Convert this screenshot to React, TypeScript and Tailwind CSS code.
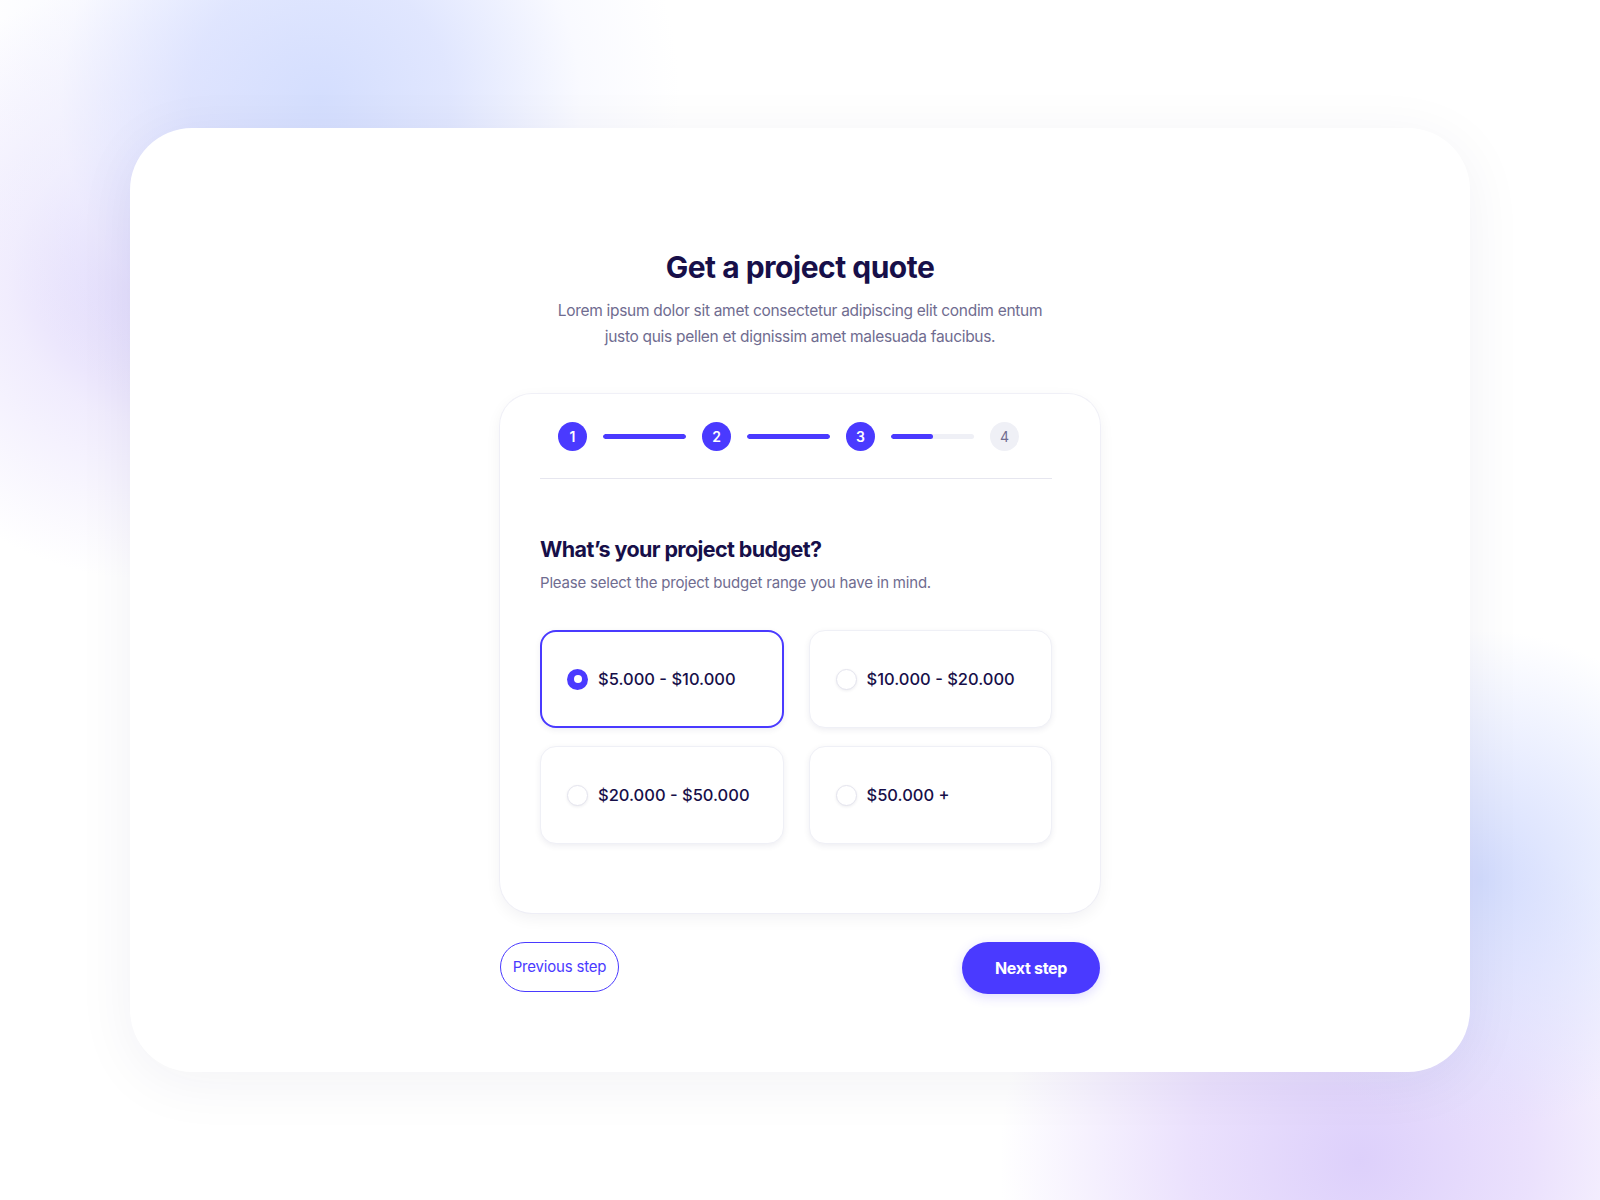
import React from "react";

const options = [
  { label: "$5.000 - $10.000", selected: true },
  { label: "$10.000 - $20.000", selected: false },
  { label: "$20.000 - $50.000", selected: false },
  { label: "$50.000 +", selected: false },
];

function Radio({ selected }: { selected: boolean }) {
  if (selected) {
    return (
      <span className="flex h-[21px] w-[21px] shrink-0 items-center justify-center rounded-full bg-[#4a3aff]">
        <span className="h-[8px] w-[8px] rounded-full bg-white" />
      </span>
    );
  }
  return (
    <span className="h-[21px] w-[21px] shrink-0 rounded-full border border-[#e4e4ee] bg-white shadow-[0_1px_3px_rgba(20,20,70,0.08)]" />
  );
}

function Step({ n, active }: { n: number; active: boolean }) {
  return (
    <span
      className={
        active
          ? "flex h-[29px] w-[29px] items-center justify-center rounded-full bg-[#4a3aff] text-[14px] font-semibold text-white"
          : "flex h-[29px] w-[29px] items-center justify-center rounded-full bg-[#eff0f6] text-[14px] font-normal text-[#6f6c90]"
      }
    >
      {n}
    </span>
  );
}

function Line({ fill }: { fill: "full" | "half" }) {
  return (
    <span className="mx-4 h-[5px] w-[83px] overflow-hidden rounded-full bg-[#eff0f6]">
      <span className={fill === "full" ? "block h-full w-full rounded-full bg-[#4a3aff]" : "block h-full w-1/2 rounded-full bg-[#4a3aff]"} />
    </span>
  );
}

export default function App() {
  return (
    <div
      className="flex h-[1200px] w-full items-center justify-center bg-white bg-[radial-gradient(circle_at_320px_100px,#d4defe_0px,rgba(214,222,254,0.75)_130px,rgba(240,242,255,0.4)_260px,transparent_360px),radial-gradient(circle_at_150px_280px,rgba(216,206,250,0.95)_0px,rgba(226,218,252,0.5)_140px,transparent_300px),radial-gradient(circle_at_1480px_880px,#d3dcfd_0px,rgba(214,222,254,0.6)_110px,transparent_250px),radial-gradient(circle_at_1360px_1160px,#ddd0fb_0px,rgba(226,212,252,0.7)_170px,transparent_360px)]"
      style={{ fontFamily: "Inter, 'Noto Sans', sans-serif" }}
    >
      <div className="flex h-[944px] w-[1340px] flex-col items-center rounded-[62px] bg-white pt-[119px] shadow-[0_10px_60px_rgba(30,30,80,0.06)]">
        <h1 className="text-[30px] font-bold leading-[40px] tracking-[-0.5px] text-[#170f49]">
          Get a project quote
        </h1>
        <p className="mt-[11px] text-center text-[15.5px] leading-[26px] tracking-[-0.3px] text-[#6f6c90]">
          Lorem ipsum dolor sit amet consectetur adipiscing elit condim entum
          <br />
          justo quis pellen et dignissim amet malesuada faucibus.
        </p>

        <div className="mt-[44px] flex h-[519px] w-[600px] flex-col rounded-[32px] bg-white pl-[40px] pr-[48px] pt-[28px] shadow-[0_0_0_1px_rgba(235,235,245,0.7),0_5px_16px_rgba(8,15,52,0.06)]">
          <div className="flex items-center pl-[18px]">
            <Step n={1} active />
            <Line fill="full" />
            <Step n={2} active />
            <Line fill="full" />
            <Step n={3} active />
            <Line fill="half" />
            <Step n={4} active={false} />
          </div>
          <div className="mt-[27px] h-px w-full bg-[#e6e6ef]" />

          <h2 className="mt-[54px] text-[21.5px] font-bold leading-[32px] tracking-[-0.6px] text-[#170f49]">
            What’s your project budget?
          </h2>
          <p className="mt-[6px] text-[15px] leading-[24px] tracking-[-0.2px] text-[#6f6c90]">
            Please select the project budget range you have in mind.
          </p>

          <div className="mt-[35px] grid grid-cols-2 gap-x-[25px] gap-y-[18px]">
            {options.map((o) => (
              <div
                key={o.label}
                className={
                  o.selected
                    ? "flex h-[98px] items-center gap-[10px] rounded-[16px] border-2 border-[#4a3aff] bg-white pl-[25px] shadow-[0_2px_6px_rgba(19,18,66,0.07)]"
                    : "flex h-[98px] items-center gap-[10px] rounded-[16px] border border-[#eff0f6] bg-white pl-[26px] shadow-[0_2px_6px_rgba(19,18,66,0.07)]"
                }
              >
                <Radio selected={o.selected} />
                <span className="text-[16.5px] font-medium text-[#170f49]">{o.label}</span>
              </div>
            ))}
          </div>
        </div>

        <div className="mt-[29px] flex w-[600px] items-start justify-between">
          <button className="flex h-[50px] w-[119px] items-center justify-center rounded-full border border-[#4a3aff] bg-white text-[15px] tracking-[-0.2px] text-[#4a3aff]">
            Previous step
          </button>
          <button className="flex h-[52px] w-[138px] items-center justify-center rounded-full bg-[#4a3aff] text-[16px] font-bold tracking-[-0.3px] text-white shadow-[0_3px_12px_rgba(74,58,255,0.18)]">
            Next step
          </button>
        </div>
      </div>
    </div>
  );
}
